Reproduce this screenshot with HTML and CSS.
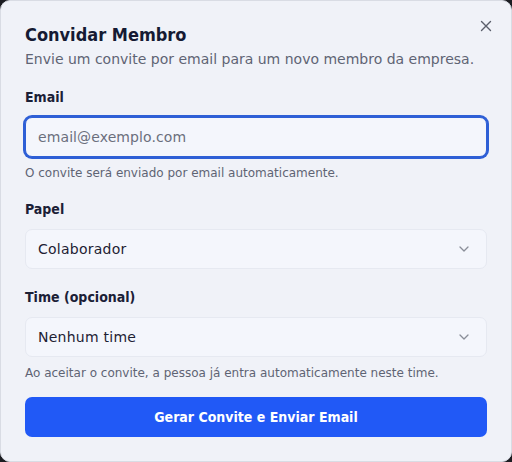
FILE: index.html
```html
<!DOCTYPE html>
<html lang="pt-BR">
<head>
<meta charset="utf-8">
<title>Convidar Membro</title>
<link rel="stylesheet" href="styles.css">
</head>
<body>
<div class="dialog">
  <button class="close" aria-label="Fechar">
    <svg width="12" height="12" viewBox="0 0 12 12"><path d="M1.5 1.5 L10.5 10.5 M10.5 1.5 L1.5 10.5" stroke="#5a5e6b" stroke-width="1.4" stroke-linecap="round" fill="none"/></svg>
  </button>
  <header class="head">
    <h2 class="title">Convidar Membro</h2>
    <p class="subtitle">Envie um convite por email para um novo membro da empresa.</p>
  </header>
  <div class="field">
    <label class="label">Email</label>
    <div class="input focused"><span class="placeholder">email@exemplo.com</span></div>
    <p class="hint">O convite será enviado por email automaticamente.</p>
  </div>
  <div class="field">
    <label class="label">Papel</label>
    <div class="input select"><span class="value">Colaborador</span>
      <svg class="chev" width="12" height="8" viewBox="0 0 12 8"><path d="M2 2 L6 6 L10 2" stroke="#8a8e99" stroke-width="1.3" fill="none" stroke-linecap="round" stroke-linejoin="round"/></svg>
    </div>
  </div>
  <div class="field">
    <label class="label">Time (opcional)</label>
    <div class="input select"><span class="value">Nenhum time</span>
      <svg class="chev" width="12" height="8" viewBox="0 0 12 8"><path d="M2 2 L6 6 L10 2" stroke="#8a8e99" stroke-width="1.3" fill="none" stroke-linecap="round" stroke-linejoin="round"/></svg>
    </div>
    <p class="hint">Ao aceitar o convite, a pessoa já entra automaticamente neste time.</p>
  </div>
  <button class="submit">Gerar Convite e Enviar Email</button>
</div>
</body>
</html>
```
FILE: styles.css
```css
* { box-sizing: border-box; }
html, body { margin: 0; padding: 0; }
body {
  width: 512px;
  height: 462px;
  background: #1c1d22;
  font-family: "DejaVu Sans", "Open Sans", sans-serif;
  overflow: hidden;
}
.dialog {
  position: relative;
  width: 512px;
  height: 462px;
  background: #f0f2f8;
  border: 1px solid #d9dce4;
  border-radius: 10px;
  padding: 22px 24px 24px 24px;
  display: flex;
  flex-direction: column;
}
.close {
  position: absolute;
  top: 18px;
  right: 18px;
  width: 14px;
  height: 14px;
  padding: 0;
  border: 0;
  background: transparent;
  display: flex;
  align-items: center;
  justify-content: center;
}
.head { display: flex; flex-direction: column; gap: 2px; }
.title {
  margin: 0;
  font-family: "DejaVu Sans Condensed", "DejaVu Sans", sans-serif;
  font-size: 18px;
  line-height: 24px;
  font-weight: 700;
  color: #151a33;
}
.subtitle {
  margin: 0;
  font-size: 14px;
  line-height: 20px;
  color: #5f6474;
}
.field { display: flex; flex-direction: column; margin-top: 18px; }
.label {
  font-family: "DejaVu Sans Condensed", "DejaVu Sans", sans-serif;
  font-size: 14px;
  line-height: 20px;
  font-weight: 700;
  color: #1b2036;
  margin-bottom: 10px;
}
.input {
  height: 40px;
  border: 1px solid #e6e9f1;
  background: #f4f6fc;
  border-radius: 7px;
  padding: 0 12px;
  display: flex;
  align-items: center;
  justify-content: space-between;
}
.input.focused {
  border: 1px solid #2e5fd6;
  box-shadow: 0 0 0 2px #2e5fd6;
}
.placeholder { font-size: 14px; letter-spacing: 0.1px; color: #6b6f7c; }
.value { font-size: 14px; letter-spacing: 0.25px; color: #1d2133; }
.chev { margin-right: 4px; }
.hint {
  margin: 8px 0 0 0;
  font-size: 12px;
  line-height: 16px;
  color: #5f6474;
}
.submit {
  margin-top: 16px;
  height: 40px;
  border: 0;
  border-radius: 7px;
  background: #2159f6;
  color: #ffffff;
  font-family: "DejaVu Sans Condensed", "DejaVu Sans", sans-serif;
  font-size: 14px;
  font-weight: 700;
}
```
